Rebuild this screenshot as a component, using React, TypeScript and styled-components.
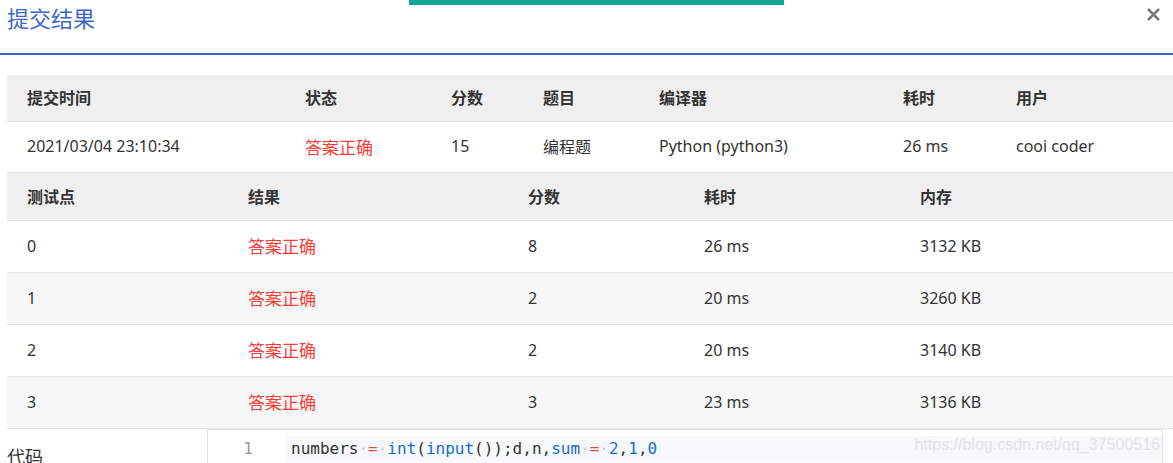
import React from 'react'
import styled, { createGlobalStyle } from 'styled-components'

const GlobalStyle = createGlobalStyle`
  *, *::before, *::after { box-sizing: border-box; }
  body {
    margin: 0;
    background: #fff;
    font-family: "Noto Sans", "Noto Sans CJK SC", sans-serif;
    color: #333;
    overflow: hidden;
  }
`

const Page = styled.div`
  position: relative;
  width: 1173px;
  height: 463px;
  overflow: hidden;
`

const Toast = styled.div`
  position: absolute;
  left: 409px;
  top: 0;
  width: 375px;
  height: 5px;
  background: #16a595;
`

const Header = styled.header`
  height: 55px;
  border-bottom: 2px solid #3c68c4;
  display: flex;
  justify-content: space-between;
  align-items: flex-start;
  padding: 0 12px 0 7px;
`

const Title = styled.h1`
  margin: 0;
  font-family: "Noto Sans CJK SC", sans-serif;
  font-size: 22px;
  font-weight: 400;
  line-height: 34px;
  color: #3c68c4;
`

const Close = styled.button`
  border: 0;
  background: none;
  padding: 0;
  margin-top: 7px;
  width: 15px;
  height: 15px;
  display: flex;
`

const Body = styled.div`
  padding: 20px 0 0 7px;
`

const Grid = styled.div<{ $cols: string }>`
  display: grid;
  grid-template-columns: ${p => p.$cols};
  width: 1166px;
`

const Row = styled.div<{ $head?: boolean; $stripe?: boolean; $h: number }>`
  display: contents;
  & > div {
    height: ${p => p.$h}px;
    background: ${p => (p.$head ? '#efefef' : p.$stripe ? '#f7f7f7' : '#fff')};
    border-bottom: 1px solid #e4e4e4;
    font-weight: ${p => (p.$head ? 700 : 400)};
  }
`

const Cell = styled.div<{ $ok?: boolean }>`
  display: flex;
  align-items: center;
  padding: 0 0 2px 20px;
  font-size: ${p => (p.$ok ? '17px' : '16px')};
  color: ${p => (p.$ok ? '#fb3b36' : '#333')};
  white-space: nowrap;
`

const CodeSection = styled.div`
  display: flex;
  align-items: flex-start;
`

const CodeLabel = styled.div`
  width: 200px;
  padding-top: 14px;
  font-family: "Noto Sans CJK SC", sans-serif;
  font-size: 18px;
  color: #333;
`

const CodeBox = styled.div`
  position: relative;
  width: 956px;
  height: 60px;
  border-top: 1px solid #e2e2e2;
  border-left: 1px solid #e2e2e2;
  border-right: 1px solid #e2e2e2;
  padding-top: 6px;
  display: flex;
`

const Gutter = styled.div`
  width: 78px;
  padding-right: 33px;
  text-align: right;
  font-family: "DejaVu Sans Mono", monospace;
  font-size: 16px;
  line-height: 26px;
  color: #999;
`

const CodeLine = styled.div`
  flex: 1;
  height: 26px;
  background: #f6f8fa;
  padding-left: 5px;
  font-family: "DejaVu Sans Mono", monospace;
  font-size: 16px;
  line-height: 26px;
  color: #333;
  white-space: pre;
`

const Tok = styled.span<{ $k: 'kw' | 'op' | 'ws' }>`
  color: ${p => (p.$k === 'kw' ? '#1a6ccc' : p.$k === 'op' ? '#e3483f' : '#c8c8c8')};
`

const Watermark = styled.div`
  position: absolute;
  right: 2px;
  top: 6px;
  font-family: "Liberation Sans", Arial, sans-serif;
  font-size: 16px;
  color: #e3e4e6;
`

const topCols = '278px 146px 92px 116px 244px 113px 177px'
const caseCols = '221px 280px 176px 216px 273px'

const cases = [
  ['0', '8', '26 ms', '3132 KB'],
  ['1', '2', '20 ms', '3260 KB'],
  ['2', '2', '20 ms', '3140 KB'],
  ['3', '3', '23 ms', '3136 KB'],
]

const App = () => {
  const dot = <Tok $k="ws">·</Tok>
  return (
    <>
      <GlobalStyle />
      <Page>
        <Toast />
        <Header>
          <Title>提交结果</Title>
          <Close aria-label="close">
            <svg width="15" height="15" viewBox="0 0 15 15">
              <path d="M2 2 L13 13 M13 2 L2 13" stroke="#7a7a7a" strokeWidth="2.5" />
            </svg>
          </Close>
        </Header>

        <Body>
          <Grid $cols={topCols}>
            <Row $head $h={47}>
              {['提交时间', '状态', '分数', '题目', '编译器', '耗时', '用户'].map(t => (
                <Cell key={t}>{t}</Cell>
              ))}
            </Row>
            <Row $h={51}>
              <Cell>2021/03/04 23:10:34</Cell>
              <Cell $ok>答案正确</Cell>
              <Cell>15</Cell>
              <Cell>编程题</Cell>
              <Cell>Python (python3)</Cell>
              <Cell>26 ms</Cell>
              <Cell>cooi coder</Cell>
            </Row>
          </Grid>

          <Grid $cols={caseCols}>
            <Row $head $h={48}>
              {['测试点', '结果', '分数', '耗时', '内存'].map(t => (
                <Cell key={t}>{t}</Cell>
              ))}
            </Row>
            {cases.map((c, i) => (
              <Row key={c[0]} $h={52} $stripe={i % 2 === 1}>
                <Cell>{c[0]}</Cell>
                <Cell $ok>答案正确</Cell>
                <Cell>{c[1]}</Cell>
                <Cell>{c[2]}</Cell>
                <Cell>{c[3]}</Cell>
              </Row>
            ))}
          </Grid>

          <CodeSection>
            <CodeLabel>代码</CodeLabel>
            <CodeBox>
              <Gutter>1</Gutter>
              <CodeLine>
                numbers{dot}<Tok $k="op">=</Tok>{dot}<Tok $k="kw">int</Tok>(<Tok $k="kw">input</Tok>());d,n,<Tok $k="kw">sum</Tok>{dot}<Tok $k="op">=</Tok>{dot}<Tok $k="kw">2</Tok>,<Tok $k="kw">1</Tok>,<Tok $k="kw">0</Tok>
              </CodeLine>
              <Watermark>https://blog.csdn.net/qq_37500516</Watermark>
            </CodeBox>
          </CodeSection>
        </Body>
      </Page>
    </>
  )
}

export default App
